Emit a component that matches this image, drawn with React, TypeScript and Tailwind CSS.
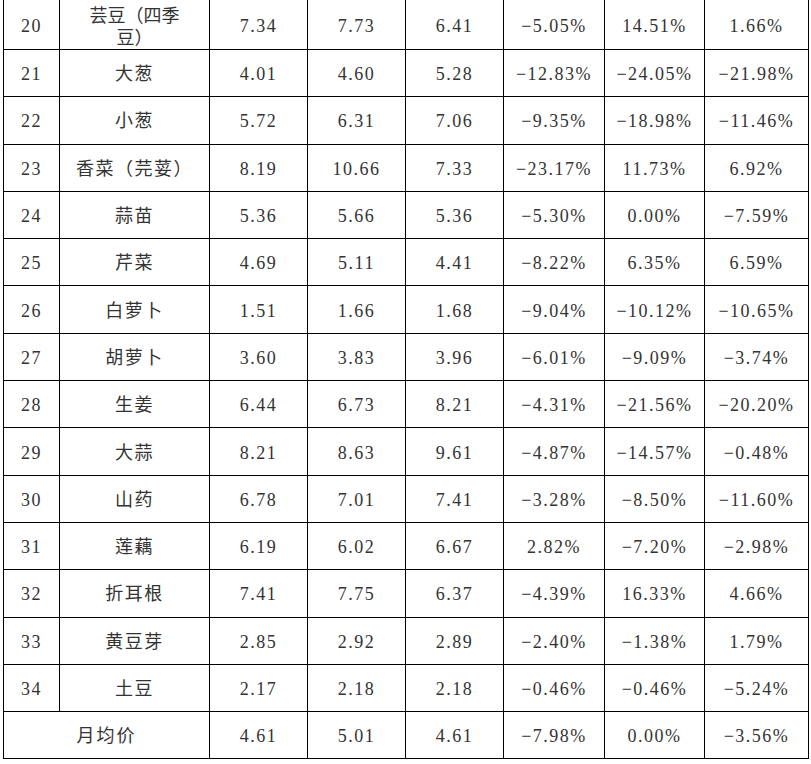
const rows: [string, string, string, string, string, string, string, string][] = [
  ['20', '芸豆（四季豆）', '7.34', '7.73', '6.41', '−5.05%', '14.51%', '1.66%'],
  ['21', '大葱', '4.01', '4.60', '5.28', '−12.83%', '−24.05%', '−21.98%'],
  ['22', '小葱', '5.72', '6.31', '7.06', '−9.35%', '−18.98%', '−11.46%'],
  ['23', '香菜（芫荽）', '8.19', '10.66', '7.33', '−23.17%', '11.73%', '6.92%'],
  ['24', '蒜苗', '5.36', '5.66', '5.36', '−5.30%', '0.00%', '−7.59%'],
  ['25', '芹菜', '4.69', '5.11', '4.41', '−8.22%', '6.35%', '6.59%'],
  ['26', '白萝卜', '1.51', '1.66', '1.68', '−9.04%', '−10.12%', '−10.65%'],
  ['27', '胡萝卜', '3.60', '3.83', '3.96', '−6.01%', '−9.09%', '−3.74%'],
  ['28', '生姜', '6.44', '6.73', '8.21', '−4.31%', '−21.56%', '−20.20%'],
  ['29', '大蒜', '8.21', '8.63', '9.61', '−4.87%', '−14.57%', '−0.48%'],
  ['30', '山药', '6.78', '7.01', '7.41', '−3.28%', '−8.50%', '−11.60%'],
  ['31', '莲藕', '6.19', '6.02', '6.67', '2.82%', '−7.20%', '−2.98%'],
  ['32', '折耳根', '7.41', '7.75', '6.37', '−4.39%', '16.33%', '4.66%'],
  ['33', '黄豆芽', '2.85', '2.92', '2.89', '−2.40%', '−1.38%', '1.79%'],
  ['34', '土豆', '2.17', '2.18', '2.18', '−0.46%', '−0.46%', '−5.24%'],
];

const cell = 'border border-black text-center align-middle p-0';
const num = 'tracking-[1.5px] pt-[3px]';

export default function App() {
  return (
    <div className="bg-white w-[811px] h-[764px] pl-[3px] text-[18px] text-[#333] font-['Liberation_Serif','Noto_Sans_CJK_SC',serif]">
      <table className="table-fixed border-collapse w-[805px]">
        <colgroup>
          <col className="w-[56px]" />
          <col className="w-[150px]" />
          <col className="w-[98px]" />
          <col className="w-[98px]" />
          <col className="w-[98px]" />
          <col className="w-[101px]" />
          <col className="w-[100px]" />
          <col className="w-[104px]" />
        </colgroup>
        <tbody>
          {rows.map((r, i) => (
            <tr key={r[0]} className={i === 0 ? 'h-[49px]' : 'h-[47.3px]'}>
              {r.map((v, j) => (
                <td
                  key={j}
                  className={`${cell} ${i === 0 ? 'border-t-0' : ''} ${j === 1 ? (i === 0 ? 'px-[22px] pt-[5px] leading-[22px]' : 'tracking-[1.5px] pt-[3px]') : num}`}
                >
                  {v}
                </td>
              ))}
            </tr>
          ))}
          <tr className="h-[47.3px]">
            <td colSpan={2} className={`${cell} tracking-[2px] pt-[3px]`}>月均价</td>
            <td className={`${cell} ${num}`}>4.61</td>
            <td className={`${cell} ${num}`}>5.01</td>
            <td className={`${cell} ${num}`}>4.61</td>
            <td className={`${cell} ${num}`}>−7.98%</td>
            <td className={`${cell} ${num}`}>0.00%</td>
            <td className={`${cell} ${num}`}>−3.56%</td>
          </tr>
        </tbody>
      </table>
    </div>
  );
}
